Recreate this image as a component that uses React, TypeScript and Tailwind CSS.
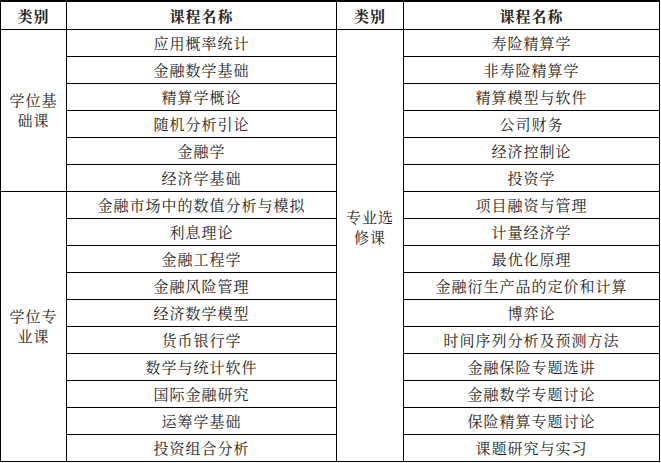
import React from "react";

type Row = {
  left?: { label: string[]; span: number };
  leftCourse: string;
  right?: { label: string[]; span: number };
  rightCourse: string;
};

const rows: Row[] = [
  { left: { label: ["学位基", "础课"], span: 6 }, leftCourse: "应用概率统计", right: { label: ["专业选", "修课"], span: 16 }, rightCourse: "寿险精算学" },
  { leftCourse: "金融数学基础", rightCourse: "非寿险精算学" },
  { leftCourse: "精算学概论", rightCourse: "精算模型与软件" },
  { leftCourse: "随机分析引论", rightCourse: "公司财务" },
  { leftCourse: "金融学", rightCourse: "经济控制论" },
  { leftCourse: "经济学基础", rightCourse: "投资学" },
  { left: { label: ["学位专", "业课"], span: 10 }, leftCourse: "金融市场中的数值分析与模拟", rightCourse: "项目融资与管理" },
  { leftCourse: "利息理论", rightCourse: "计量经济学" },
  { leftCourse: "金融工程学", rightCourse: "最优化原理" },
  { leftCourse: "金融风险管理", rightCourse: "金融衍生产品的定价和计算" },
  { leftCourse: "经济数学模型", rightCourse: "博弈论" },
  { leftCourse: "货币银行学", rightCourse: "时间序列分析及预测方法" },
  { leftCourse: "数学与统计软件", rightCourse: "金融保险专题选讲" },
  { leftCourse: "国际金融研究", rightCourse: "金融数学专题讨论" },
  { leftCourse: "运筹学基础", rightCourse: "保险精算专题讨论" },
  { leftCourse: "投资组合分析", rightCourse: "课题研究与实习" },
];

const cell = "border border-black text-center align-middle p-0";

export default function App() {
  return (
    <div
      className="w-[661px] h-[463px] bg-white text-[#222] text-[15px] leading-[17px] tracking-[1px]"
      style={{ fontFamily: '"Noto Serif CJK SC", "Noto Sans CJK SC", serif' }}
    >
      <table className="border-collapse table-fixed w-[659px] border-t-2 border-black">
        <colgroup>
          <col className="w-[66px]" />
          <col className="w-[270px]" />
          <col className="w-[67px]" />
          <col className="w-[256px]" />
        </colgroup>
        <thead>
          <tr className="h-[28px]">
            <th className={`${cell} font-bold border-t-2`}>类别</th>
            <th className={`${cell} font-bold border-t-2`}>课程名称</th>
            <th className={`${cell} font-bold border-t-2`}>类别</th>
            <th className={`${cell} font-bold border-t-2`}>课程名称</th>
          </tr>
        </thead>
        <tbody>
          {rows.map((r, i) => (
            <tr key={i} className="h-[27px]">
              {r.left && (
                <td rowSpan={r.left.span} className={`${cell} leading-[20px]`}>
                  {r.left.label[0]}
                  <br />
                  {r.left.label[1]}
                </td>
              )}
              <td className={cell}>{r.leftCourse}</td>
              {r.right && (
                <td rowSpan={r.right.span} className={`${cell} leading-[20px] pb-[36px]`}>
                  {r.right.label[0]}
                  <br />
                  {r.right.label[1]}
                </td>
              )}
              <td className={cell}>{r.rightCourse}</td>
            </tr>
          ))}
        </tbody>
      </table>
    </div>
  );
}
